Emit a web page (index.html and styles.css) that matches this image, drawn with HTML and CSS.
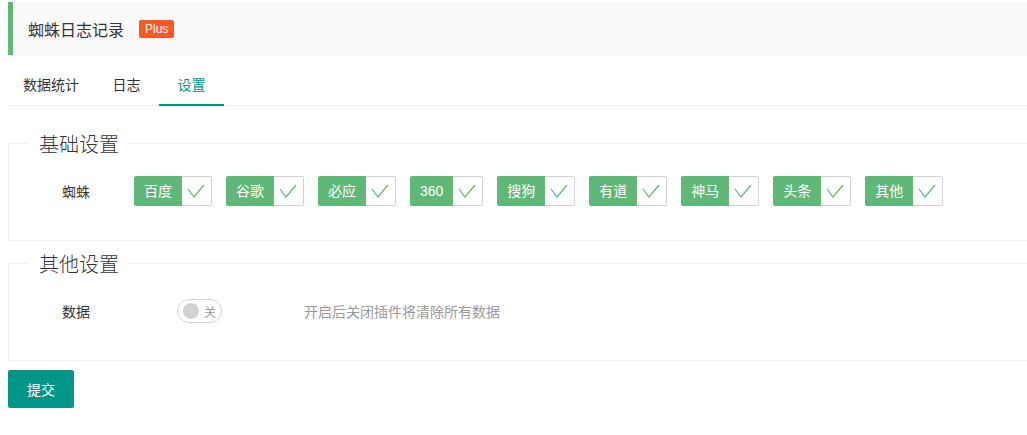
FILE: index.html
```html
<!DOCTYPE html>
<html lang="zh-CN">
<head>
    <meta charset="UTF-8">
    <meta name="viewport" content="width=device-width, initial-scale=1.0">
    <title>蜘蛛日志记录</title>
    <link rel="stylesheet" href="styles.css">
</head>
<body>
    <div class="page">
        <div class="quote">
            <span class="quote-title">蜘蛛日志记录</span>
            <span class="badge">Plus</span>
        </div>

        <ul class="tabs">
            <li>数据统计</li>
            <li>日志</li>
            <li class="active">设置</li>
        </ul>

        <form class="form">
            <fieldset class="field">
                <legend>基础设置</legend>
                <div class="form-item">
                    <label class="form-label">蜘蛛</label>
                    <div class="checks">
                        <div class="check"><span>百度</span><i><svg viewBox="0 0 30 30"><path d="M6 13 L12 21 L22 9"/></svg></i></div>
                        <div class="check"><span>谷歌</span><i><svg viewBox="0 0 30 30"><path d="M6 13 L12 21 L22 9"/></svg></i></div>
                        <div class="check"><span>必应</span><i><svg viewBox="0 0 30 30"><path d="M6 13 L12 21 L22 9"/></svg></i></div>
                        <div class="check"><span>360</span><i><svg viewBox="0 0 30 30"><path d="M6 13 L12 21 L22 9"/></svg></i></div>
                        <div class="check"><span>搜狗</span><i><svg viewBox="0 0 30 30"><path d="M6 13 L12 21 L22 9"/></svg></i></div>
                        <div class="check"><span>有道</span><i><svg viewBox="0 0 30 30"><path d="M6 13 L12 21 L22 9"/></svg></i></div>
                        <div class="check"><span>神马</span><i><svg viewBox="0 0 30 30"><path d="M6 13 L12 21 L22 9"/></svg></i></div>
                        <div class="check"><span>头条</span><i><svg viewBox="0 0 30 30"><path d="M6 13 L12 21 L22 9"/></svg></i></div>
                        <div class="check"><span>其他</span><i><svg viewBox="0 0 30 30"><path d="M6 13 L12 21 L22 9"/></svg></i></div>
                    </div>
                </div>
            </fieldset>

            <fieldset class="field">
                <legend>其他设置</legend>
                <div class="form-item">
                    <label class="form-label">数据</label>
                    <div class="switch"><i></i><em>关</em></div>
                    <div class="aux">开启后关闭插件将清除所有数据</div>
                </div>
            </fieldset>

            <button type="button" class="btn">提交</button>
        </form>
    </div>
</body>
</html>
```

FILE: styles.css
```css
html {
    overflow-x: hidden;
}
body {
    margin: 2px 0 0 8px;
    font-family: "Liberation Sans", "Noto Sans CJK SC", sans-serif;
    font-size: 14px;
    color: #333;
    background: #fff;
}
.page {
    margin-right: -30px;
}

/* 标题块 */
.quote {
    display: flex;
    align-items: center;
    height: 53px;
    padding: 0 15px;
    border-left: 5px solid #5fb878;
    background: #f9f9f9;
    margin-bottom: 10px;
}
.quote-title {
    font-size: 16px;
    color: #333;
}
.badge {
    margin-left: 15px;
    height: 18px;
    line-height: 18px;
    padding: 0 6px;
    font-size: 12px;
    color: #fff;
    background: #ff5722;
    border-radius: 2px;
}

/* 选项卡 */
.tabs {
    display: flex;
    margin: 0;
    padding: 0;
    list-style: none;
    height: 40px;
    border-bottom: 1px solid #eee;
}
.tabs li {
    min-width: 35px;
    padding: 0 15px;
    line-height: 40px;
    text-align: center;
    color: #333;
    position: relative;
}
.tabs li.active {
    color: #009688;
}
.tabs li.active::after {
    content: "";
    position: absolute;
    left: 0;
    right: 0;
    bottom: -1px;
    height: 2px;
    background: #009688;
}

/* 表单 */
.form {
    padding-top: 23px;
}
.field {
    margin: 0 0 8px;
    padding: 18px 15px 34px;
    border: 1px solid #eee;
}
.field legend {
    margin-left: 5px;
    padding: 0 10px;
    font-size: 20px;
    font-weight: 300;
    color: #333;
}
.form-item {
    display: flex;
    align-items: center;
    height: 30px;
}
.form-label {
    width: 104px;
    text-align: center;
    flex-shrink: 0;
}
.checks {
    display: flex;
    gap: 14px;
    margin-left: 6px;
}
.check {
    display: flex;
    height: 30px;
}
.check span {
    padding: 0 10px;
    line-height: 30px;
    background: #5fb878;
    color: #fff;
    border-radius: 2px 0 0 2px;
}
.check i {
    width: 29px;
    height: 28px;
    border: 1px solid #d2d2d2;
    border-left: none;
    border-radius: 0 2px 2px 0;
}
.check svg {
    display: block;
    width: 30px;
    height: 30px;
    margin-top: -1px;
    fill: none;
    stroke: #5fb878;
    stroke-width: 1.2;
}

.switch {
    display: flex;
    align-items: center;
    box-sizing: border-box;
    width: 45px;
    height: 24px;
    margin-left: 49px;
    padding: 0 5px;
    border: 1px solid #d2d2d2;
    border-radius: 20px;
    background: #fff;
}
.switch i {
    width: 16px;
    height: 16px;
    border-radius: 50%;
    background: #d2d2d2;
}
.switch em {
    margin-left: 5px;
    font-style: normal;
    font-size: 12px;
    color: #999;
}
.aux {
    margin-left: 82px;
    color: #999;
}

.btn {
    height: 38px;
    padding: 0 19px;
    margin-top: 1px;
    border: none;
    border-radius: 2px;
    background: #009688;
    color: #fff;
    font-family: inherit;
    font-size: 14px;
}
```
